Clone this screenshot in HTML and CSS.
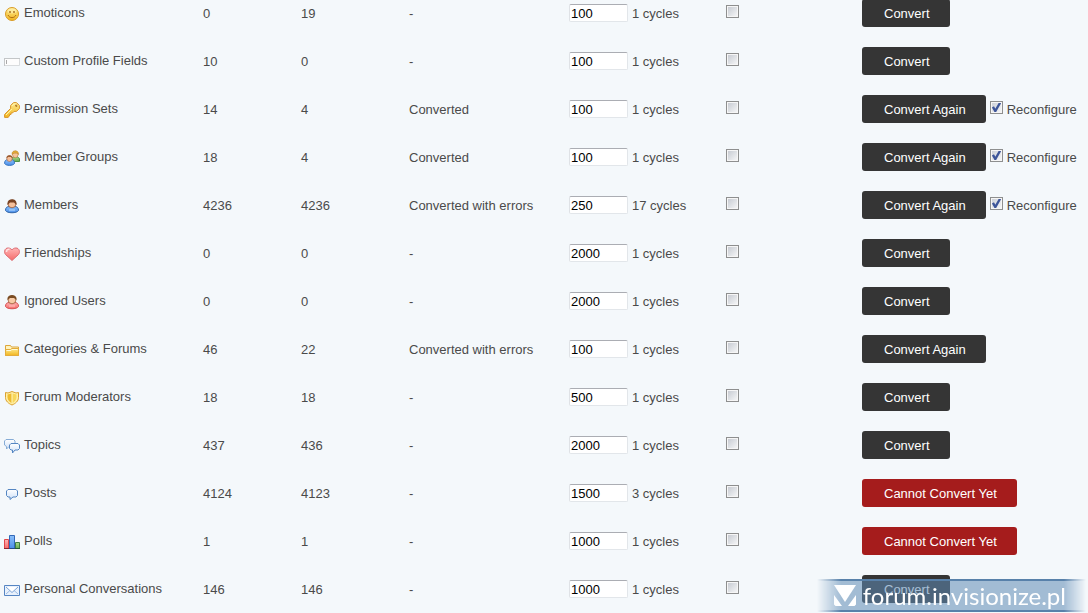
FILE: index.html
```html
<!DOCTYPE html>
<html lang="en">
<head>
<meta charset="utf-8">
<meta name="viewport" content="width=device-width, initial-scale=1">
<title>Converter</title>
<link rel="stylesheet" href="styles.css">
</head>
<body>
<svg class="defs" width="0" height="0" aria-hidden="true">
  <defs>
    <linearGradient id="gold" x1="0" y1="0" x2="0" y2="1"><stop offset="0" stop-color="#fdeb92"/><stop offset="1" stop-color="#f2b51e"/></linearGradient>
    <linearGradient id="blue" x1="0" y1="0" x2="0" y2="1"><stop offset="0" stop-color="#8cc0fa"/><stop offset="1" stop-color="#4a8ee8"/></linearGradient>
    <linearGradient id="red" x1="0" y1="0" x2="0" y2="1"><stop offset="0" stop-color="#ffb4b4"/><stop offset="1" stop-color="#f56a6a"/></linearGradient>
    <linearGradient id="green" x1="0" y1="0" x2="0" y2="1"><stop offset="0" stop-color="#a9d98a"/><stop offset="1" stop-color="#62a951"/></linearGradient>
    <linearGradient id="pale" x1="0" y1="0" x2="0" y2="1"><stop offset="0" stop-color="#fff"/><stop offset="1" stop-color="#cfe1f8"/></linearGradient>
  </defs>
</svg>
<main>
<table class="steps">
  <colgroup><col class="c-name"><col class="c-source"><col class="c-done"><col class="c-status"><col class="c-cycle"><col class="c-check"><col></colgroup>
  <tbody>
  <tr>
    <td><span class="name"><svg class="icon" viewBox="0 0 16 16"><circle cx="8" cy="8" r="6.500" fill="url(#gold)" stroke="#d99b25"/><ellipse cx="8" cy="5" rx="4.500" ry="2.500" fill="#fff5b8" opacity=".6"/><path d="M6 5v2M10 5v2" stroke="#a26310" stroke-width="1.300"/><path d="M4 9c1.500 3.500 6.500 3.500 8 0" fill="none" stroke="#b06c10"/></svg>Emoticons</span></td>
    <td class="fact">0</td><td class="fact">19</td><td class="fact">-</td>
    <td><label class="cycle"><input class="amount" type="text" value="100">1 cycles</label></td>
    <td><input class="tick" type="checkbox" aria-label="Emoticons"></td>
    <td><div class="actions"><button class="btn" type="button">Convert</button></div></td>
  </tr>
  <tr>
    <td><span class="name"><svg class="icon" viewBox="0 0 16 16"><path d="M.5 4.500h15v7H.5z" fill="#fdfdfd" stroke="#d9dcde"/><path d="M0 4.500h16M.5 4v8" stroke="#c3c6c8"/><path d="M2.500 6v4" stroke="#aaa"/></svg>Custom Profile Fields</span></td>
    <td class="fact">10</td><td class="fact">0</td><td class="fact">-</td>
    <td><label class="cycle"><input class="amount" type="text" value="100">1 cycles</label></td>
    <td><input class="tick" type="checkbox" aria-label="Custom Profile Fields"></td>
    <td><div class="actions"><button class="btn" type="button">Convert</button></div></td>
  </tr>
  <tr>
    <td><span class="name"><svg class="icon" viewBox="0 0 16 16"><path d="M9.500.6h3l2.900 2.900v3L12.500 9.400H10L8.500 11H7v1.500H5.500V14l-1.500 1.400H.6v-3l6-6V3.500z" fill="url(#gold)" stroke="#d9942a"/><path d="M2 13l6-6M8 4l2-2h2" fill="none" stroke="#fff3a8"/><path d="M11 3.500h1.500V5" fill="none" stroke="#b98230" stroke-width="1.400"/></svg>Permission Sets</span></td>
    <td class="fact">14</td><td class="fact">4</td><td class="fact">Converted</td>
    <td><label class="cycle"><input class="amount" type="text" value="100">1 cycles</label></td>
    <td><input class="tick" type="checkbox" aria-label="Permission Sets"></td>
    <td><div class="actions"><button class="btn" type="button">Convert Again</button><label class="again"><input class="tick" type="checkbox" checked>Reconfigure</label></div></td>
  </tr>
  <tr>
    <td><span class="name"><svg class="icon" viewBox="0 0 16 16"><path d="M7.500 10.500V8.500L9.500 7h4l2 1.500v3h-6z" fill="url(#green)" stroke="#4e9448"/><ellipse cx="11.300" cy="4.500" rx="2.800" ry="3.300" fill="#f5c49a" stroke="#b97c3c" stroke-width=".6"/><path d="M8 4.500C7.500-.5 15-.5 14.600 4.500L13 3.200H10z" fill="#e1ab39" stroke="#bd812a" stroke-width=".5"/><path d="M.6 13.500c0-2.500 1-4 3.400-4h3c2.500 0 3.500 1.500 3.500 4-1.500 2.500-8.500 2.500-9.900 0z" fill="url(#blue)" stroke="#3673bd"/><ellipse cx="5.500" cy="8.500" rx="2.700" ry="3" fill="#f4bd98" stroke="#ab683f" stroke-width=".6"/><path d="M2.500 8.500C1.500 4 9.500 4 8.500 8.500L7 7H4z" fill="#9a5c32"/></svg>Member Groups</span></td>
    <td class="fact">18</td><td class="fact">4</td><td class="fact">Converted</td>
    <td><label class="cycle"><input class="amount" type="text" value="100">1 cycles</label></td>
    <td><input class="tick" type="checkbox" aria-label="Member Groups"></td>
    <td><div class="actions"><button class="btn" type="button">Convert Again</button><label class="again"><input class="tick" type="checkbox" checked>Reconfigure</label></div></td>
  </tr>
  <tr>
    <td><span class="name"><svg class="icon" viewBox="0 0 16 16"><path d="M1.500 12.500c0-3 1.500-4 4-4h5c2.500 0 4 1 4 4-1.500 3-11.500 3-13 0z" fill="url(#blue)" stroke="#2d63a8"/><path d="M5 12h6" stroke="#b8dcff"/><ellipse cx="8" cy="6" rx="3.900" ry="3.800" fill="#f6c09a" stroke="#8c4b26" stroke-width=".7"/><path d="M3.500 7C2-.6 14-.6 12.500 7L10 4.500H6z" fill="#7a4322"/></svg>Members</span></td>
    <td class="fact">4236</td><td class="fact">4236</td><td class="fact">Converted with errors</td>
    <td><label class="cycle"><input class="amount" type="text" value="250">17 cycles</label></td>
    <td><input class="tick" type="checkbox" aria-label="Members"></td>
    <td><div class="actions"><button class="btn" type="button">Convert Again</button><label class="again"><input class="tick" type="checkbox" checked>Reconfigure</label></div></td>
  </tr>
  <tr>
    <td><span class="name"><svg class="icon" viewBox="0 0 16 16"><path d="M8 14.500L1.500 8.500C-.5 6 .8 2 4 2c2 0 3.200.8 4 2 .8-1.200 2-2 4-2 3.200 0 4.500 4 2.500 6.500z" fill="url(#red)" stroke="#dc6c72"/><path d="M2.500 6c0-2 1-3 3-2.700" fill="none" stroke="#ffe2e2" stroke-width="1.500"/></svg>Friendships</span></td>
    <td class="fact">0</td><td class="fact">0</td><td class="fact">-</td>
    <td><label class="cycle"><input class="amount" type="text" value="2000">1 cycles</label></td>
    <td><input class="tick" type="checkbox" aria-label="Friendships"></td>
    <td><div class="actions"><button class="btn" type="button">Convert</button></div></td>
  </tr>
  <tr>
    <td><span class="name"><svg class="icon" viewBox="0 0 16 16"><path d="M1.500 12.500c0-3 1.500-4 4-4h5c2.500 0 4 1 4 4-1.500 3-11.500 3-13 0z" fill="url(#red)" stroke="#d64f50"/><path d="M5 12h6" stroke="#ffc4c0"/><ellipse cx="8" cy="6" rx="3.900" ry="3.800" fill="#f8cba6" stroke="#8c4b26" stroke-width=".7"/><path d="M3.500 6C2-.6 14-.6 12.500 6L10 4H6z" fill="#7a4c22"/></svg>Ignored Users</span></td>
    <td class="fact">0</td><td class="fact">0</td><td class="fact">-</td>
    <td><label class="cycle"><input class="amount" type="text" value="2000">1 cycles</label></td>
    <td><input class="tick" type="checkbox" aria-label="Ignored Users"></td>
    <td><div class="actions"><button class="btn" type="button">Convert</button></div></td>
  </tr>
  <tr>
    <td><span class="name"><svg class="icon" viewBox="0 0 16 16"><path d="M1.500 3.500h5l1 1.500h7v8.500h-13z" fill="#fff3bd" stroke="#dda63a"/><path d="M1.500 7.500h5l1-1h7v7h-13z" fill="url(#gold)" stroke="#e3ac3c"/><path d="M2.500 8.500h4.500l1-1h5.500" fill="none" stroke="#fffad8"/></svg>Categories &amp; Forums</span></td>
    <td class="fact">46</td><td class="fact">22</td><td class="fact">Converted with errors</td>
    <td><label class="cycle"><input class="amount" type="text" value="100">1 cycles</label></td>
    <td><input class="tick" type="checkbox" aria-label="Categories &amp; Forums"></td>
    <td><div class="actions"><button class="btn" type="button">Convert Again</button></div></td>
  </tr>
  <tr>
    <td><span class="name"><svg class="icon" viewBox="0 0 16 16"><path d="M1.500 2.500L4 3l4-1.500L12 3l2.500-.5v5c0 3.500-3 6-6.500 7.500-3.500-1.500-6.500-4-6.500-7.500z" fill="#fff0a8" stroke="#dba02f"/><path d="M3.500 4.500L8 3.200v10C5.500 12 3.500 10 3.500 7.500z" fill="#efbc2e"/><path d="M8 3.200l4.500 1.300v3C12.500 10 10.500 12 8 13.200z" fill="#f8d75b"/><path d="M8 3v10" stroke="#fff7c4"/></svg>Forum Moderators</span></td>
    <td class="fact">18</td><td class="fact">18</td><td class="fact">-</td>
    <td><label class="cycle"><input class="amount" type="text" value="500">1 cycles</label></td>
    <td><input class="tick" type="checkbox" aria-label="Forum Moderators"></td>
    <td><div class="actions"><button class="btn" type="button">Convert</button></div></td>
  </tr>
  <tr>
    <td><span class="name"><svg class="icon" viewBox="0 0 16 16"><path d="M2 1.500h7.500l1.500 1.500v4L9.500 8.500H5L2.500 11V8.500L.5 7V3z" fill="url(#pale)" stroke="#86acd6"/><path d="M7 5.500h7l1.500 1.500v3.500L14 12h-3l-2.500 3v-3H7l-1.500-1.500V7z" fill="url(#pale)" stroke="#5586c2"/></svg>Topics</span></td>
    <td class="fact">437</td><td class="fact">436</td><td class="fact">-</td>
    <td><label class="cycle"><input class="amount" type="text" value="2000">1 cycles</label></td>
    <td><input class="tick" type="checkbox" aria-label="Topics"></td>
    <td><div class="actions"><button class="btn" type="button">Convert</button></div></td>
  </tr>
  <tr>
    <td><span class="name"><svg class="icon" viewBox="0 0 16 16"><path d="M4 3.500h8L13.500 5v4.500L12 11H9l-3 2.500V11H4L2.500 9.500V5z" fill="url(#pale)" stroke="#5586c2"/></svg>Posts</span></td>
    <td class="fact">4124</td><td class="fact">4123</td><td class="fact">-</td>
    <td><label class="cycle"><input class="amount" type="text" value="1500">3 cycles</label></td>
    <td><input class="tick" type="checkbox" aria-label="Posts"></td>
    <td><div class="actions"><button class="btn btn-blocked" type="button">Cannot Convert Yet</button></div></td>
  </tr>
  <tr>
    <td><span class="name"><svg class="icon" viewBox="0 0 16 16"><path d="M.5 5.500h4v9h-4z" fill="url(#red)" stroke="#e0464a"/><path d="M5.500 1.500h5v13h-5z" fill="url(#blue)" stroke="#3268b8"/><path d="M11.500 8.500h4v6h-4z" fill="url(#green)" stroke="#3f7f42"/><path d="M0 14.500h5" stroke="#8c2430"/><path d="M5 14.500h6" stroke="#254b86"/><path d="M11 14.500h5" stroke="#285d34"/></svg>Polls</span></td>
    <td class="fact">1</td><td class="fact">1</td><td class="fact">-</td>
    <td><label class="cycle"><input class="amount" type="text" value="1000">1 cycles</label></td>
    <td><input class="tick" type="checkbox" aria-label="Polls"></td>
    <td><div class="actions"><button class="btn btn-blocked" type="button">Cannot Convert Yet</button></div></td>
  </tr>
  <tr>
    <td><span class="name"><svg class="icon" viewBox="0 0 16 16"><path d="M.5 3.500h15v10H.5z" fill="#e8f1fc" stroke="#5585c3"/><path d="M2 12l4.500-4M14 12L9.500 8" stroke="#9bbce5"/><path d="M2 5l6 5.500L14 5" fill="#fff" stroke="#7ba4d8"/></svg>Personal Conversations</span></td>
    <td class="fact">146</td><td class="fact">146</td><td class="fact">-</td>
    <td><label class="cycle"><input class="amount" type="text" value="1000">1 cycles</label></td>
    <td><input class="tick" type="checkbox" aria-label="Personal Conversations"></td>
    <td><div class="actions"><button class="btn" type="button">Convert</button></div></td>
  </tr>
  </tbody>
</table>
</main>
<div class="watermark">
  <svg class="mark" viewBox="0 0 24 24"><path d="M1 1h22L12 18z" fill="#fff"/><path d="M1 11l8 11H2.500L1 20.500zM23 11l-8 11h6.500l1.500-1.500z" fill="#fff"/></svg>
  <span>forum.invisionize.pl</span>
</div>
</body>
</html>
```
FILE: styles.css
```css
* {
  box-sizing: border-box;
}

body {
  margin: 0;
  overflow: hidden;
  background: #f4f8fb;
  color: #4a4a4a;
  font-family: "Liberation Sans", Arial, sans-serif;
  font-size: 13px;
  line-height: 16px;
}

.defs {
  position: absolute;
}

/* The list is shown scrolled a little past its first row's top edge. */
.steps {
  width: 100%;
  margin-top: -11px;
  border-collapse: collapse;
  table-layout: fixed;
}

.c-name { width: 203px; }
.c-source { width: 98px; }
.c-done { width: 108px; }
.c-status { width: 160px; }
.c-cycle { width: 157px; }
.c-check { width: 136px; }

.steps td {
  height: 48px;
  padding: 0;
  vertical-align: middle;
  white-space: nowrap;
}

.steps .fact {
  padding-top: 2px;
}

.name {
  display: flex;
  align-items: flex-end;
  gap: 4px;
  padding-left: 4px;
  padding-bottom: 1px;
}

.icon {
  width: 16px;
  height: 16px;
  flex: none;
  margin-bottom: -1px;
}

.cycle,
.actions,
.again {
  display: flex;
  align-items: center;
  gap: 4px;
}

.cycle {
  align-items: flex-end;
}

.again {
  padding-top: 2px;
}

.amount {
  width: 59px;
  height: 18px;
  padding: 0 1px;
  border: 1px solid #e2e6ea;
  border-top-color: #abadb3;
  border-left-color: #dfe2e6;
  border-radius: 2px;
  background: #fff;
  color: #000;
  font: inherit;
}

.tick {
  display: block;
  flex: none;
  width: 13px;
  height: 13px;
  margin: 0 0 3px;
  appearance: none;
  border: 1px solid #8e8f8f;
  background: linear-gradient(135deg, #c8ccd3, #f4f5f6) content-box, #fff;
  padding: 1px;
  box-shadow: inset 0 0 0 1px #f6f6f6;
}

.again .tick {
  margin-bottom: 5px;
}

.tick:checked {
  background:
    url("data:image/svg+xml,%3Csvg xmlns='http://www.w3.org/2000/svg' viewBox='0 0 11 11'%3E%3Cpath d='M2.500 5l2 3.500L8.500 1.500' fill='none' stroke='%233d5599' stroke-width='2'/%3E%3C/svg%3E") border-box,
    linear-gradient(135deg, #cdd1d8, #f4f5f6) content-box,
    #fff;
}

.btn {
  height: 28px;
  padding: 2px 20px 0 22px;
  border: 0;
  border-radius: 3px;
  background: #353535;
  color: #fff;
  font: inherit;
}

.btn-blocked {
  background: #a51c1c;
}

.watermark {
  position: fixed;
  right: 2px;
  bottom: 1px;
  display: flex;
  align-items: center;
  gap: 6px;
  height: 33px;
  padding: 0 20px 0 16px;
  border-top: 2px solid #5881aa;
  border-bottom: 2px solid #5881aa;
  background: rgba(94, 138, 181, 0.55);
  background-clip: padding-box;
  color: #fff;
  font-family: Lato, "Open Sans", sans-serif;
  font-size: 24px;
  line-height: 28px;
  mask-image: linear-gradient(to right, transparent, #000 24px, #000 calc(100% - 22px), transparent);
}

.mark {
  width: 24px;
  height: 24px;
}
```
